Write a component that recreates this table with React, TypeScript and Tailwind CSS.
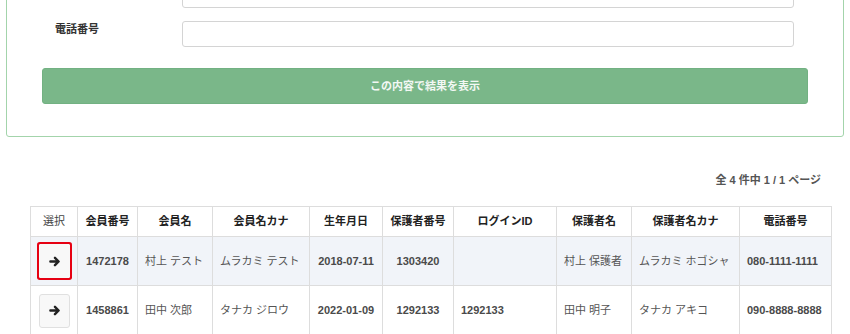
import React from 'react';

interface Member {
  id: string;
  name: string;
  kana: string;
  birthday: string;
  guardianNo: string;
  loginId: string;
  guardianName: string;
  guardianKana: string;
  tel: string;
}

const members: Member[] = [
  {
    id: '1472178',
    name: '村上 テスト',
    kana: 'ムラカミ テスト',
    birthday: '2018-07-11',
    guardianNo: '1303420',
    loginId: '',
    guardianName: '村上 保護者',
    guardianKana: 'ムラカミ ホゴシャ',
    tel: '080-1111-1111',
  },
  {
    id: '1458861',
    name: '田中 次郎',
    kana: 'タナカ ジロウ',
    birthday: '2022-01-09',
    guardianNo: '1292133',
    loginId: '1292133',
    guardianName: '田中 明子',
    guardianKana: 'タナカ アキコ',
    tel: '090-8888-8888',
  },
];

const headers = [
  { label: '会員番号', w: 'w-[60px]' },
  { label: '会員名', w: 'w-[75px]' },
  { label: '会員名カナ', w: 'w-[97px]' },
  { label: '生年月日', w: 'w-[73px]' },
  { label: '保護者番号', w: 'w-[71px]' },
  { label: 'ログインID', w: 'w-[103px]' },
  { label: '保護者名', w: 'w-[75px]' },
  { label: '保護者名カナ', w: 'w-[108px]' },
  { label: '電話番号', w: 'w-[92px]' },
];

// thick right arrow used in the select buttons
const Arrow = () => (
  <svg width="11" height="11" viewBox="0 0 12 12" fill="none" stroke="currentColor" strokeWidth="2.6" strokeLinecap="round" strokeLinejoin="round">
    <path d="M1.5 6h8.5M6.5 2l4 4-4 4" />
  </svg>
);

const App: React.FC = () => {
  const td = 'border border-[#dddddd] px-[7px] align-middle';

  return (
    <div className="bg-white w-[850px] h-[334px] overflow-hidden text-[11px] text-[#444]" style={{ fontFamily: '"Liberation Sans", "Noto Sans CJK JP", sans-serif' }}>
      {/* search form card (scrolled, top is cut off) */}
      <div className="mx-[6px] -mt-[44px] border border-[#a3d4ab] rounded-[3px] px-[35px] pt-[25px] pb-[32px]">
        <div className="flex items-center h-[26px]">
          <div className="w-[140px]" />
          <input type="text" className="w-[612px] h-[26px] border border-[#d4d4d4] rounded-[3px] bg-white" />
        </div>
        <div className="flex items-center h-[26px] mt-[13px]">
          <label className="w-[140px] pl-[13px] font-bold text-[#333] -mt-[10px]">電話番号</label>
          <input type="text" className="w-[612px] h-[26px] border border-[#d4d4d4] rounded-[3px] bg-white" />
        </div>
        <button className="mt-[21px] w-full h-[36px] rounded-[3px] bg-[#7ab789] border border-[#72b182] text-[#f3f8f4] font-bold text-[11px]">
          この内容で結果を表示
        </button>
      </div>

      {/* results */}
      <div className="pl-[30px] pr-[19px]">
        <div className="text-right pr-[10px] mt-[36px] h-[14px] leading-[14px] text-[#555] font-bold">
          全 4 件中 1 / 1 ページ
        </div>
        <table className="mt-[19px] w-[801px] border-collapse table-fixed">
          <thead>
            <tr className="h-[30px]">
              <th className={`${td} w-[47px] text-center font-normal text-[#444]`}>選択</th>
              {headers.map((h) => (
                <th key={h.label} className={`${td} ${h.w} text-center font-bold text-[#222]`}>
                  {h.label}
                </th>
              ))}
            </tr>
          </thead>
          <tbody>
            {members.map((m, i) => (
              <tr key={m.id} className={i === 0 ? 'h-[49px] bg-[#f1f4f9]' : 'h-[50px] bg-white'}>
                <td className={`${td} text-center`}>
                  <button
                    className={`inline-flex items-center justify-center w-[31px] h-[34px] bg-[#f8f8f8] border text-[#222] ${i === 0 ? 'rounded-[1px] border-[#f8f8f8] ring-2 ring-[#e60012]' : 'rounded-[3px] border-[#e0e0e0]'}`}
                  >
                    <Arrow />
                  </button>
                </td>
                <td className={`${td} text-center font-bold text-[#4a4a4a]`}>{m.id}</td>
                <td className={`${td} text-left text-[#555]`}>{m.name}</td>
                <td className={`${td} text-left text-[#555]`}>{m.kana}</td>
                <td className={`${td} text-center font-bold text-[#4a4a4a]`}>{m.birthday}</td>
                <td className={`${td} text-center font-bold text-[#4a4a4a]`}>{m.guardianNo}</td>
                <td className={`${td} text-left font-bold text-[#4a4a4a]`}>{m.loginId}</td>
                <td className={`${td} text-left text-[#555]`}>{m.guardianName}</td>
                <td className={`${td} text-left text-[#555]`}>{m.guardianKana}</td>
                <td className={`${td} text-left font-bold text-[#4a4a4a]`}>{m.tel}</td>
              </tr>
            ))}
          </tbody>
        </table>
      </div>
    </div>
  );
};

export default App;
